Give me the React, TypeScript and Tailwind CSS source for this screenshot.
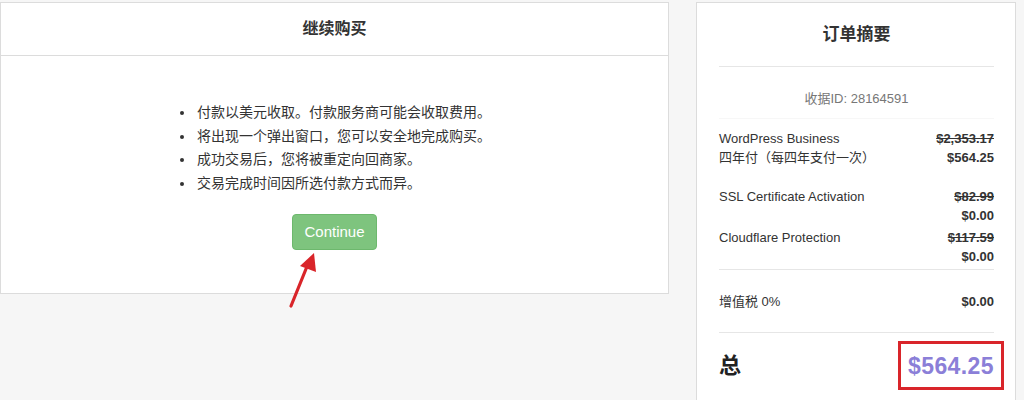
import React from 'react';

const font = { fontFamily: '"Liberation Sans", "Noto Sans CJK SC", sans-serif' };

const notes = [
  '付款以美元收取。付款服务商可能会收取费用。',
  '将出现一个弹出窗口，您可以安全地完成购买。',
  '成功交易后，您将被重定向回商家。',
  '交易完成时间因所选付款方式而异。',
];

const PriceRow = ({ label, sub, was, now, className = '' }: { label: string; sub?: string; was: string; now: string; className?: string }) => (
  <div className={`flex justify-between text-[13px] leading-[18.5px] text-[#333] ${className}`}>
    <div>
      <div>{label}</div>
      {sub && <div>{sub}</div>}
    </div>
    <div className="text-right font-bold">
      <div className="line-through">{was}</div>
      <div>{now}</div>
    </div>
  </div>
);

export default function App() {
  return (
    <div className="relative w-[1024px] h-[400px] overflow-hidden bg-[#f6f6f6] text-[#333]" style={font}>
      <div className="flex items-start pt-[2px]">
        {/* Left: continue purchase */}
        <div className="w-[669px] border border-[#dcdcdc] bg-white">
          <div className="h-[53px] border-b border-[#dcdcdc] flex items-center justify-center text-[16px] font-bold">
            继续购买
          </div>
          <div className="pt-[45px] pb-[43px] flex flex-col items-center">
            <ul className="list-disc pl-[21px] ml-[-4px] text-[14px] leading-[23.6px]">
              {notes.map((n) => (
                <li key={n} className="pl-[2px]">{n}</li>
              ))}
            </ul>
            <button className="mt-[19px] h-[36px] px-[11px] rounded-[4px] bg-[#7ec47e] border border-[#6db86d] text-white text-[15px]">
              Continue
            </button>
          </div>
        </div>

        {/* Right: order summary */}
        <div className="ml-[27px] w-[320px] h-[420px] border border-[#dcdcdc] bg-white pl-[22px] pr-[21px] pt-[20px]">
          <div className="text-center text-[17px] font-bold leading-[24px] pb-[19px] border-b border-[#e6e6e6]">
            订单摘要
          </div>
          <div className="text-center text-[13px] text-[#777] leading-[18px] pt-[23px] pb-[10px] border-b border-[#f7f7f7]">
            收据ID: 28164591
          </div>
          <PriceRow className="mt-[11px]" label="WordPress Business" sub="四年付（每四年支付一次）" was="$2,353.17" now="$564.25" />
          <PriceRow className="mt-[21px]" label="SSL Certificate Activation" was="$82.99" now="$0.00" />
          <PriceRow className="mt-[4px] pb-[3px] border-b border-[#e6e6e6]" label="Cloudflare Protection" was="$117.59" now="$0.00" />
          <div className="flex justify-between text-[13px] leading-[18px] pt-[23px] pb-[21px] border-b border-[#e6e6e6]">
            <span>增值税 0%</span>
            <span className="font-bold">$0.00</span>
          </div>
          <div className="flex justify-between items-center pt-[19px] font-bold leading-[28px]">
            <span className="text-[22px] text-[#222]">总</span>
            <span className="relative text-[23px] tracking-[0.4px] text-[#8b7fd8]">
              $564.25
              <span className="absolute left-[-10px] right-[-10px] top-[-11px] bottom-[-10px] border-[3px] border-[#d9252a]" />
            </span>
          </div>
        </div>
      </div>

      {/* annotation arrow */}
      <svg className="absolute left-[280px] top-[245px]" width="45" height="65" viewBox="0 0 45 65">
        <line x1="11" y1="61" x2="28" y2="19" stroke="#d9252a" strokeWidth="3.2" strokeLinecap="round" />
        <polygon points="34,8 36,27 20,21" fill="#d9252a" />
      </svg>
    </div>
  );
}
